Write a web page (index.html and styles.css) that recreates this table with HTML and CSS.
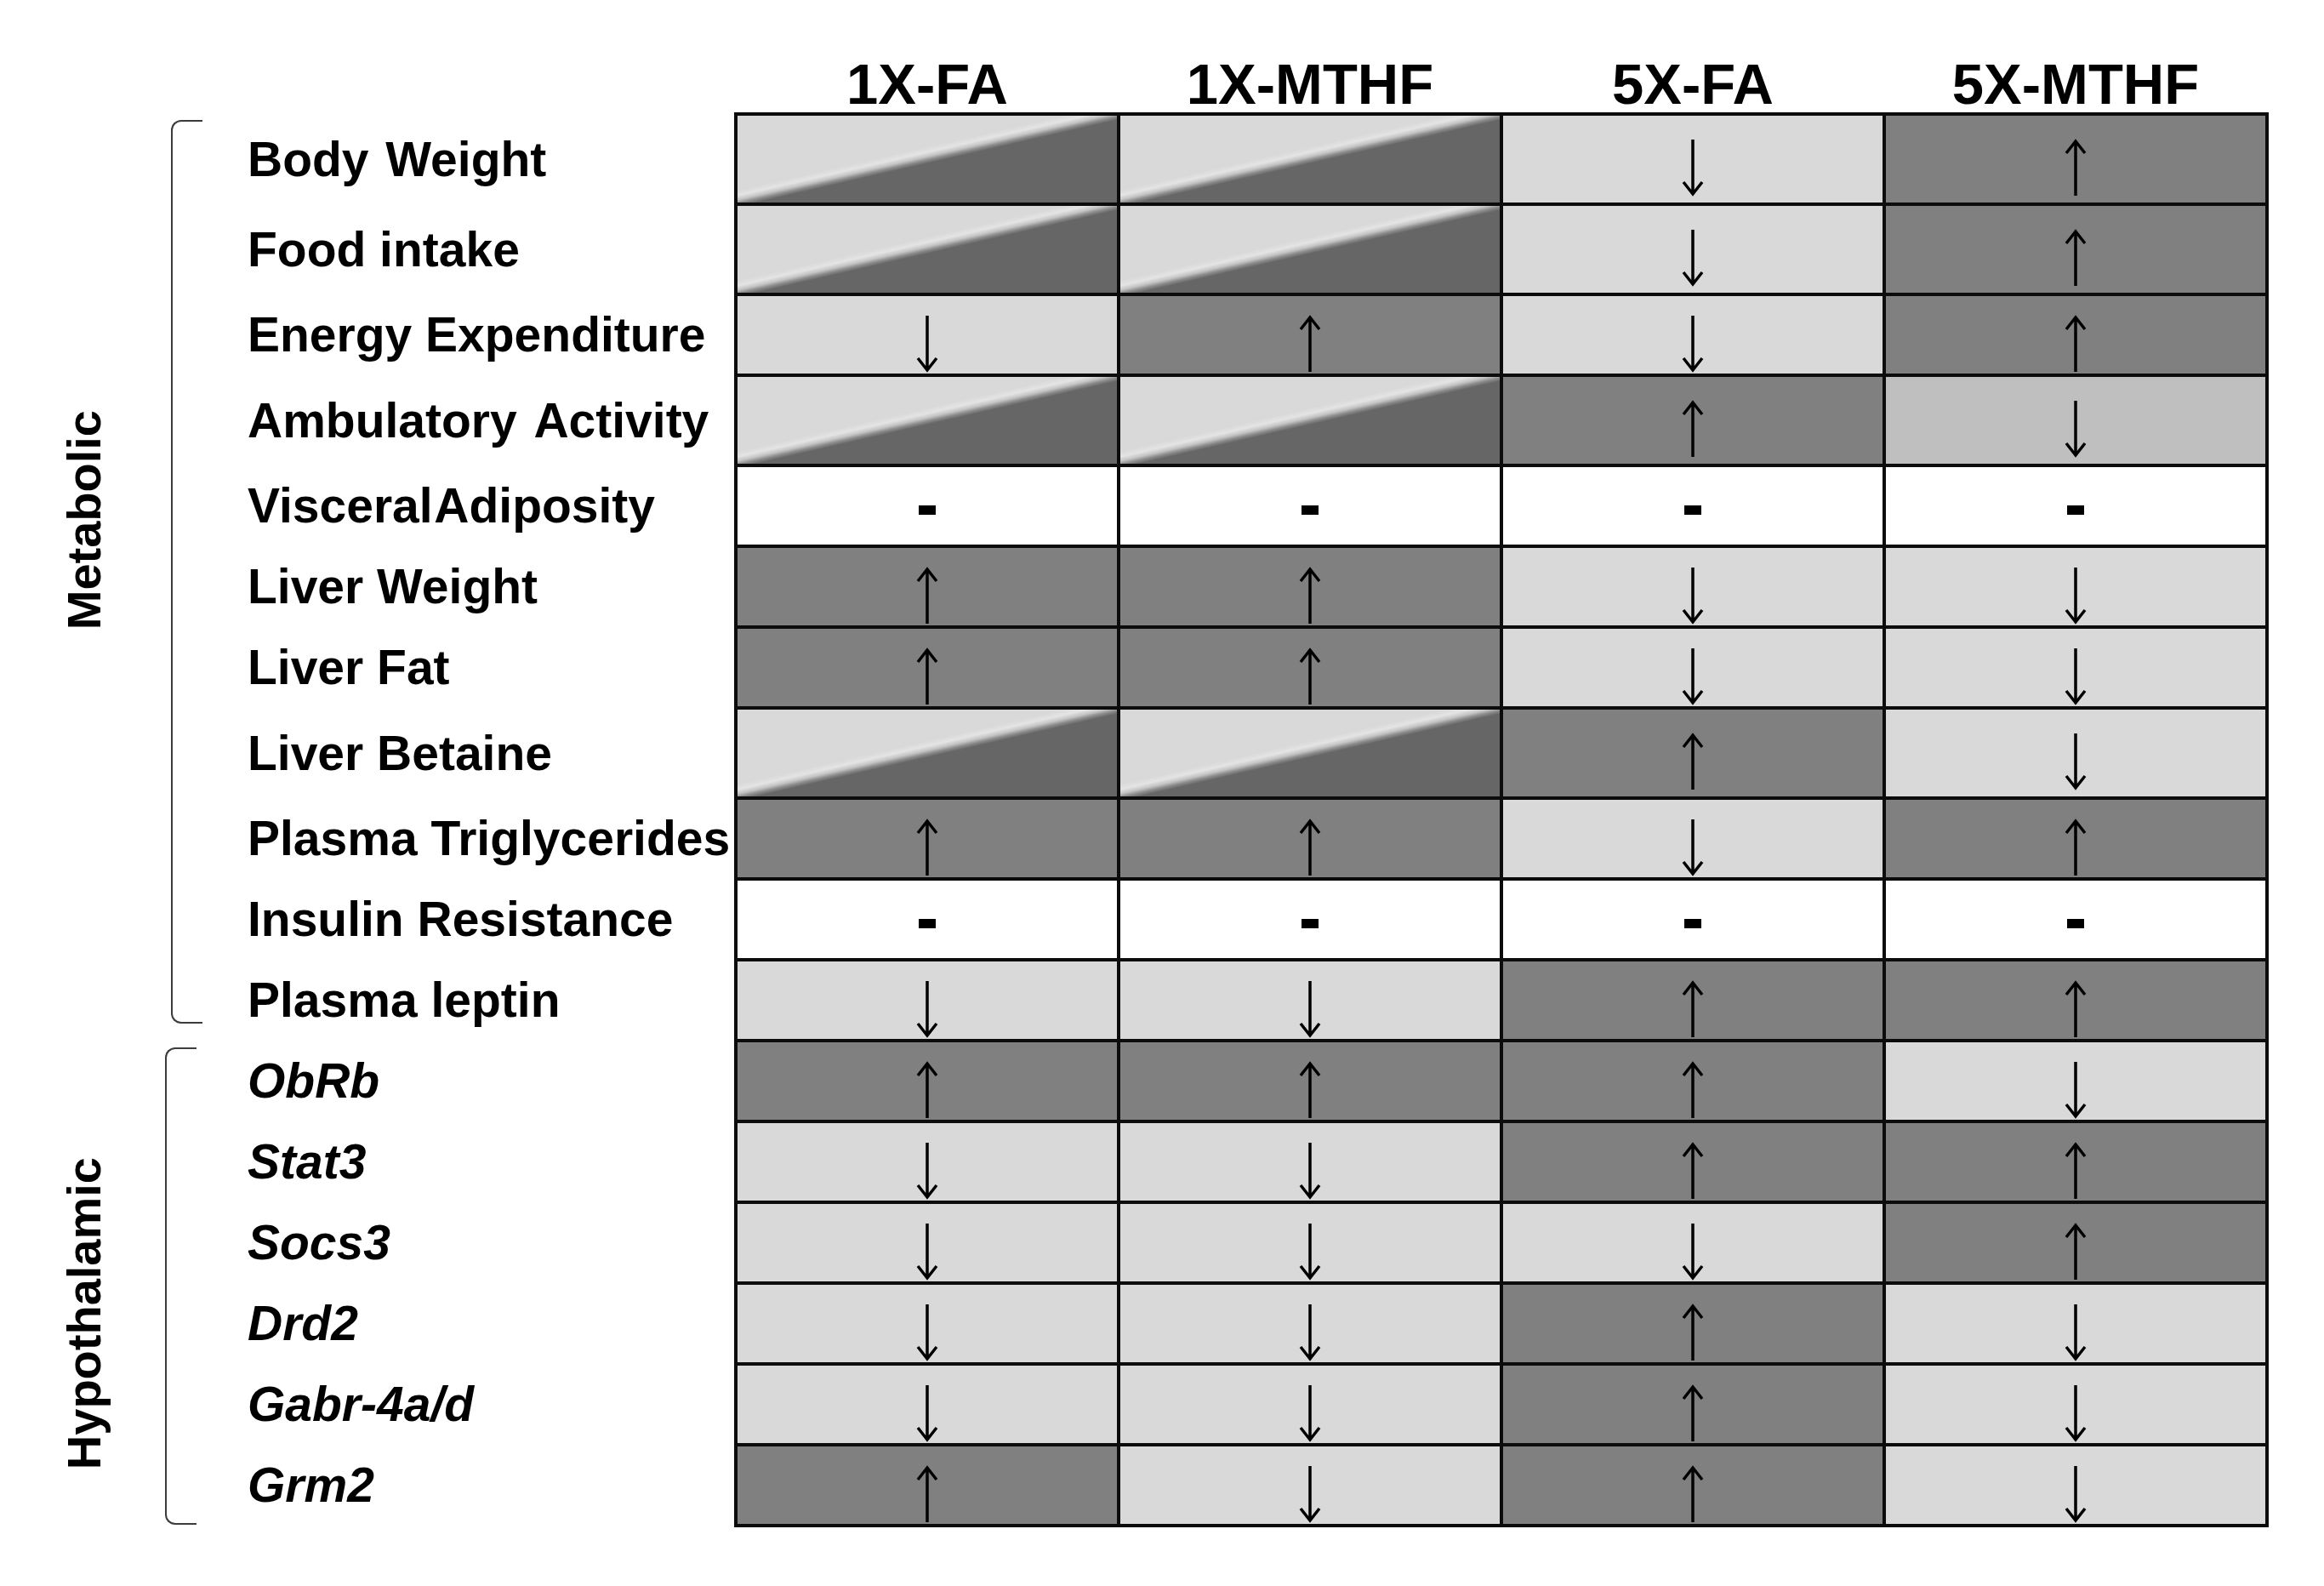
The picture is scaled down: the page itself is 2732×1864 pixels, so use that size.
FILE: index.html
```html
<!DOCTYPE html>
<html lang="en">
<head>
<meta charset="utf-8">
<title>Folic acid vs MTHF outcomes</title>
<link rel="stylesheet" href="styles.css">
</head>
<body>
<svg class="defs" width="0" height="0" aria-hidden="true">
  <symbol id="up" viewBox="0 0 30 68">
    <path d="M15 67 V3 M4 17 L15 3 L26 17" fill="none" stroke="#000" stroke-width="3.5"/>
  </symbol>
  <symbol id="down" viewBox="0 0 30 68">
    <path d="M15 1 V65 M4 51 L15 65 L26 51" fill="none" stroke="#000" stroke-width="3.5"/>
  </symbol>
</svg>
<div class="figure">
  <div class="head">
    <div class="head-spacer"></div>
    <div class="col-head">1X-FA</div>
    <div class="col-head">1X-MTHF</div>
    <div class="col-head">5X-FA</div>
    <div class="col-head">5X-MTHF</div>
  </div>
  <div class="main">
    <div class="groups">
      <div class="group metabolic">
        <div class="group-label"><span class="vtext">Metabolic</span></div>
        <div class="bracket"></div>
      </div>
      <div class="group hypo">
        <div class="group-label"><span class="vtext">Hypothalamic</span></div>
        <div class="bracket"></div>
      </div>
    </div>
    <div class="labels rows">
      <div class="label wide">Body Weight</div>
      <div class="label">Food intake</div>
      <div class="label">Energy Expenditure</div>
      <div class="label wider">Ambulatory Activity</div>
      <div class="label tight">Visceral Adiposity</div>
      <div class="label">Liver Weight</div>
      <div class="label">Liver Fat</div>
      <div class="label">Liver Betaine</div>
      <div class="label">Plasma Triglycerides</div>
      <div class="label">Insulin Resistance</div>
      <div class="label">Plasma leptin</div>
      <div class="label gene">ObRb</div>
      <div class="label gene">Stat3</div>
      <div class="label gene">Socs3</div>
      <div class="label gene">Drd2</div>
      <div class="label gene">Gabr-4a/d</div>
      <div class="label gene">Grm2</div>
    </div>
    <div class="grid rows">
      <!-- Body Weight -->
      <div class="cell wedge"></div>
      <div class="cell wedge"></div>
      <div class="cell light"><svg class="arrow"><use href="#down"/></svg></div>
      <div class="cell dark"><svg class="arrow"><use href="#up"/></svg></div>
      <!-- Food intake -->
      <div class="cell wedge"></div>
      <div class="cell wedge"></div>
      <div class="cell light"><svg class="arrow"><use href="#down"/></svg></div>
      <div class="cell dark"><svg class="arrow"><use href="#up"/></svg></div>
      <!-- Energy Expenditure -->
      <div class="cell light"><svg class="arrow"><use href="#down"/></svg></div>
      <div class="cell dark"><svg class="arrow"><use href="#up"/></svg></div>
      <div class="cell light"><svg class="arrow"><use href="#down"/></svg></div>
      <div class="cell dark"><svg class="arrow"><use href="#up"/></svg></div>
      <!-- Ambulatory Activity -->
      <div class="cell wedge"></div>
      <div class="cell wedge"></div>
      <div class="cell dark"><svg class="arrow"><use href="#up"/></svg></div>
      <div class="cell mid"><svg class="arrow"><use href="#down"/></svg></div>
      <!-- Visceral Adiposity -->
      <div class="cell none"><span class="dash"></span></div>
      <div class="cell none"><span class="dash"></span></div>
      <div class="cell none"><span class="dash"></span></div>
      <div class="cell none"><span class="dash"></span></div>
      <!-- Liver Weight -->
      <div class="cell dark"><svg class="arrow"><use href="#up"/></svg></div>
      <div class="cell dark"><svg class="arrow"><use href="#up"/></svg></div>
      <div class="cell light"><svg class="arrow"><use href="#down"/></svg></div>
      <div class="cell light"><svg class="arrow"><use href="#down"/></svg></div>
      <!-- Liver Fat -->
      <div class="cell dark"><svg class="arrow"><use href="#up"/></svg></div>
      <div class="cell dark"><svg class="arrow"><use href="#up"/></svg></div>
      <div class="cell light"><svg class="arrow"><use href="#down"/></svg></div>
      <div class="cell light"><svg class="arrow"><use href="#down"/></svg></div>
      <!-- Liver Betaine -->
      <div class="cell wedge"></div>
      <div class="cell wedge"></div>
      <div class="cell dark"><svg class="arrow"><use href="#up"/></svg></div>
      <div class="cell light"><svg class="arrow"><use href="#down"/></svg></div>
      <!-- Plasma Triglycerides -->
      <div class="cell dark"><svg class="arrow"><use href="#up"/></svg></div>
      <div class="cell dark"><svg class="arrow"><use href="#up"/></svg></div>
      <div class="cell light"><svg class="arrow"><use href="#down"/></svg></div>
      <div class="cell dark"><svg class="arrow"><use href="#up"/></svg></div>
      <!-- Insulin Resistance -->
      <div class="cell none"><span class="dash"></span></div>
      <div class="cell none"><span class="dash"></span></div>
      <div class="cell none"><span class="dash"></span></div>
      <div class="cell none"><span class="dash"></span></div>
      <!-- Plasma leptin -->
      <div class="cell light"><svg class="arrow"><use href="#down"/></svg></div>
      <div class="cell light"><svg class="arrow"><use href="#down"/></svg></div>
      <div class="cell dark"><svg class="arrow"><use href="#up"/></svg></div>
      <div class="cell dark"><svg class="arrow"><use href="#up"/></svg></div>
      <!-- ObRb -->
      <div class="cell dark"><svg class="arrow"><use href="#up"/></svg></div>
      <div class="cell dark"><svg class="arrow"><use href="#up"/></svg></div>
      <div class="cell dark"><svg class="arrow"><use href="#up"/></svg></div>
      <div class="cell light"><svg class="arrow"><use href="#down"/></svg></div>
      <!-- Stat3 -->
      <div class="cell light"><svg class="arrow"><use href="#down"/></svg></div>
      <div class="cell light"><svg class="arrow"><use href="#down"/></svg></div>
      <div class="cell dark"><svg class="arrow"><use href="#up"/></svg></div>
      <div class="cell dark"><svg class="arrow"><use href="#up"/></svg></div>
      <!-- Socs3 -->
      <div class="cell light"><svg class="arrow"><use href="#down"/></svg></div>
      <div class="cell light"><svg class="arrow"><use href="#down"/></svg></div>
      <div class="cell light"><svg class="arrow"><use href="#down"/></svg></div>
      <div class="cell dark"><svg class="arrow"><use href="#up"/></svg></div>
      <!-- Drd2 -->
      <div class="cell light"><svg class="arrow"><use href="#down"/></svg></div>
      <div class="cell light"><svg class="arrow"><use href="#down"/></svg></div>
      <div class="cell dark"><svg class="arrow"><use href="#up"/></svg></div>
      <div class="cell light"><svg class="arrow"><use href="#down"/></svg></div>
      <!-- Gabr-4a/d -->
      <div class="cell light"><svg class="arrow"><use href="#down"/></svg></div>
      <div class="cell light"><svg class="arrow"><use href="#down"/></svg></div>
      <div class="cell dark"><svg class="arrow"><use href="#up"/></svg></div>
      <div class="cell light"><svg class="arrow"><use href="#down"/></svg></div>
      <!-- Grm2 -->
      <div class="cell dark"><svg class="arrow"><use href="#up"/></svg></div>
      <div class="cell light"><svg class="arrow"><use href="#down"/></svg></div>
      <div class="cell dark"><svg class="arrow"><use href="#up"/></svg></div>
      <div class="cell light"><svg class="arrow"><use href="#down"/></svg></div>
    </div>
  </div>
</div>
</body>
</html>
```

FILE: styles.css
```css
html, body {
  margin: 0;
  padding: 0;
  background: #ffffff;
}

body {
  font-family: "Liberation Sans", Arial, sans-serif;
  font-weight: bold;
  color: #000;
}

.defs {
  position: absolute;
  width: 0;
  height: 0;
  overflow: hidden;
}

.figure {
  width: 2732px;
  height: 1864px;
}

/* column headers */
.head {
  display: flex;
  padding-top: 65px;
}

.head-spacer {
  width: 867px;
  flex: none;
}

.col-head {
  width: 446px;
  margin-right: 4px;
  flex: none;
  text-align: center;
  font-size: 67px;
  line-height: 67px;
  white-space: nowrap;
}

/* body */
.main {
  display: flex;
  align-items: flex-start;
}

.rows {
  display: grid;
  grid-template-rows: 102px 102px 91px 102px 91px 91px 91px 102px repeat(9, 91px);
  row-gap: 4px;
  padding-top: 4px;
  padding-bottom: 4px;
}

/* group brackets */
.groups {
  width: 291px;
  flex: none;
  padding-top: 9px;
  display: flex;
  flex-direction: column;
  gap: 28px;
}

.group {
  display: flex;
}

.metabolic {
  height: 1062px;
}

.hypo {
  height: 561px;
}

.group-label {
  box-sizing: border-box;
  padding-left: 71px;
  display: flex;
  align-items: center;
}

.metabolic .group-label {
  width: 201px;
  padding-bottom: 122px;
}

.hypo .group-label {
  width: 194px;
  padding-top: 64px;
}

.vtext {
  writing-mode: vertical-rl;
  transform: rotate(180deg);
  font-size: 56px;
  line-height: 56px;
  white-space: nowrap;
}

.bracket {
  box-sizing: border-box;
  width: 37px;
  border: 2px solid #3c3c3c;
  border-right: none;
  border-radius: 12px 0 0 12px;
}

/* row labels */
.labels {
  width: 572px;
  flex: none;
}

.label {
  display: flex;
  align-items: center;
  font-size: 57px;
  line-height: 1;
  white-space: nowrap;
}

.label.gene {
  font-style: italic;
}

.label.wide {
  word-spacing: 4px;
}

.label.wider {
  word-spacing: 6px;
}

.label.tight {
  word-spacing: -12px;
}

/* table */
.grid {
  flex: none;
  grid-template-columns: repeat(4, 446px);
  column-gap: 4px;
  padding-left: 4px;
  padding-right: 4px;
  background: #0c0c0c;
}

.cell {
  display: flex;
  justify-content: center;
  align-items: center;
  box-sizing: border-box;
}

.cell.light {
  background: #d9d9d9;
  padding-top: 20px;
}

.cell.dark {
  background: #808080;
  padding-top: 20px;
}

.cell.mid {
  background: #bfbfbf;
  padding-top: 20px;
}

.cell.none {
  background: #ffffff;
}

.cell.wedge {
  background: linear-gradient(to bottom right,
    #d9d9d9 0%,
    #d9d9d9 43%,
    #e4e4e4 46%,
    #c4c4c4 48.5%,
    #8c8c8c 50.5%,
    #666666 52.5%,
    #666666 100%);
}

.arrow {
  width: 30px;
  height: 68px;
  display: block;
}

.dash {
  display: block;
  width: 20px;
  height: 11px;
  background: #000;
  margin-top: 10px;
}
```
